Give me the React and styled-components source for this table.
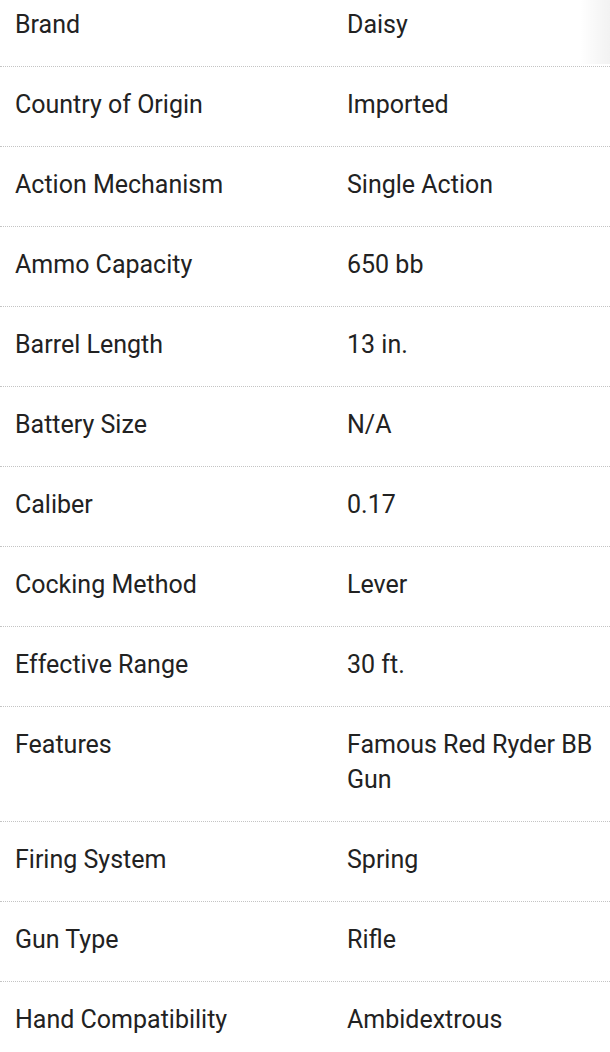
import styled, { createGlobalStyle } from "styled-components";

const GlobalStyle = createGlobalStyle`
    body {
        margin: 0;
        background: #ffffff;
        font-family: Roboto, "Liberation Sans", sans-serif;
        overflow: hidden;
    }
`;

const Page = styled.div`
    position: relative;
    width: 610px;
    height: 1052px;
    overflow: hidden;
    background: #ffffff;
`;

const Table = styled.div`
    margin-top: -13px;
`;

const Row = styled.div`
    display: grid;
    grid-template-columns: 332px 1fr;
    padding: 20px 15px 24px 15px;
    border-bottom: 1px dotted #c4c4c4;
    font-size: 25px;
    line-height: 35px;
    color: #222222;
`;

const Label = styled.div``;

const Value = styled.div``;

const EdgeShade = styled.div`
    position: absolute;
    top: 0;
    right: 0;
    width: 30px;
    height: 64px;
    background: linear-gradient(to right, rgba(0, 0, 0, 0), rgba(0, 0, 0, 0.05));
    pointer-events: none;
`;

const specs = [
    ["Brand", "Daisy"],
    ["Country of Origin", "Imported"],
    ["Action Mechanism", "Single Action"],
    ["Ammo Capacity", "650 bb"],
    ["Barrel Length", "13 in."],
    ["Battery Size", "N/A"],
    ["Caliber", "0.17"],
    ["Cocking Method", "Lever"],
    ["Effective Range", "30 ft."],
    ["Features", "Famous Red Ryder BB Gun"],
    ["Firing System", "Spring"],
    ["Gun Type", "Rifle"],
    ["Hand Compatibility", "Ambidextrous"],
];

export default function App() {
    return (
        <Page>
            <GlobalStyle />
            <Table>
                {specs.map(([label, value]) => (
                    <Row key={label}>
                        <Label>{label}</Label>
                        <Value>{value}</Value>
                    </Row>
                ))}
            </Table>
            <EdgeShade />
        </Page>
    );
}
